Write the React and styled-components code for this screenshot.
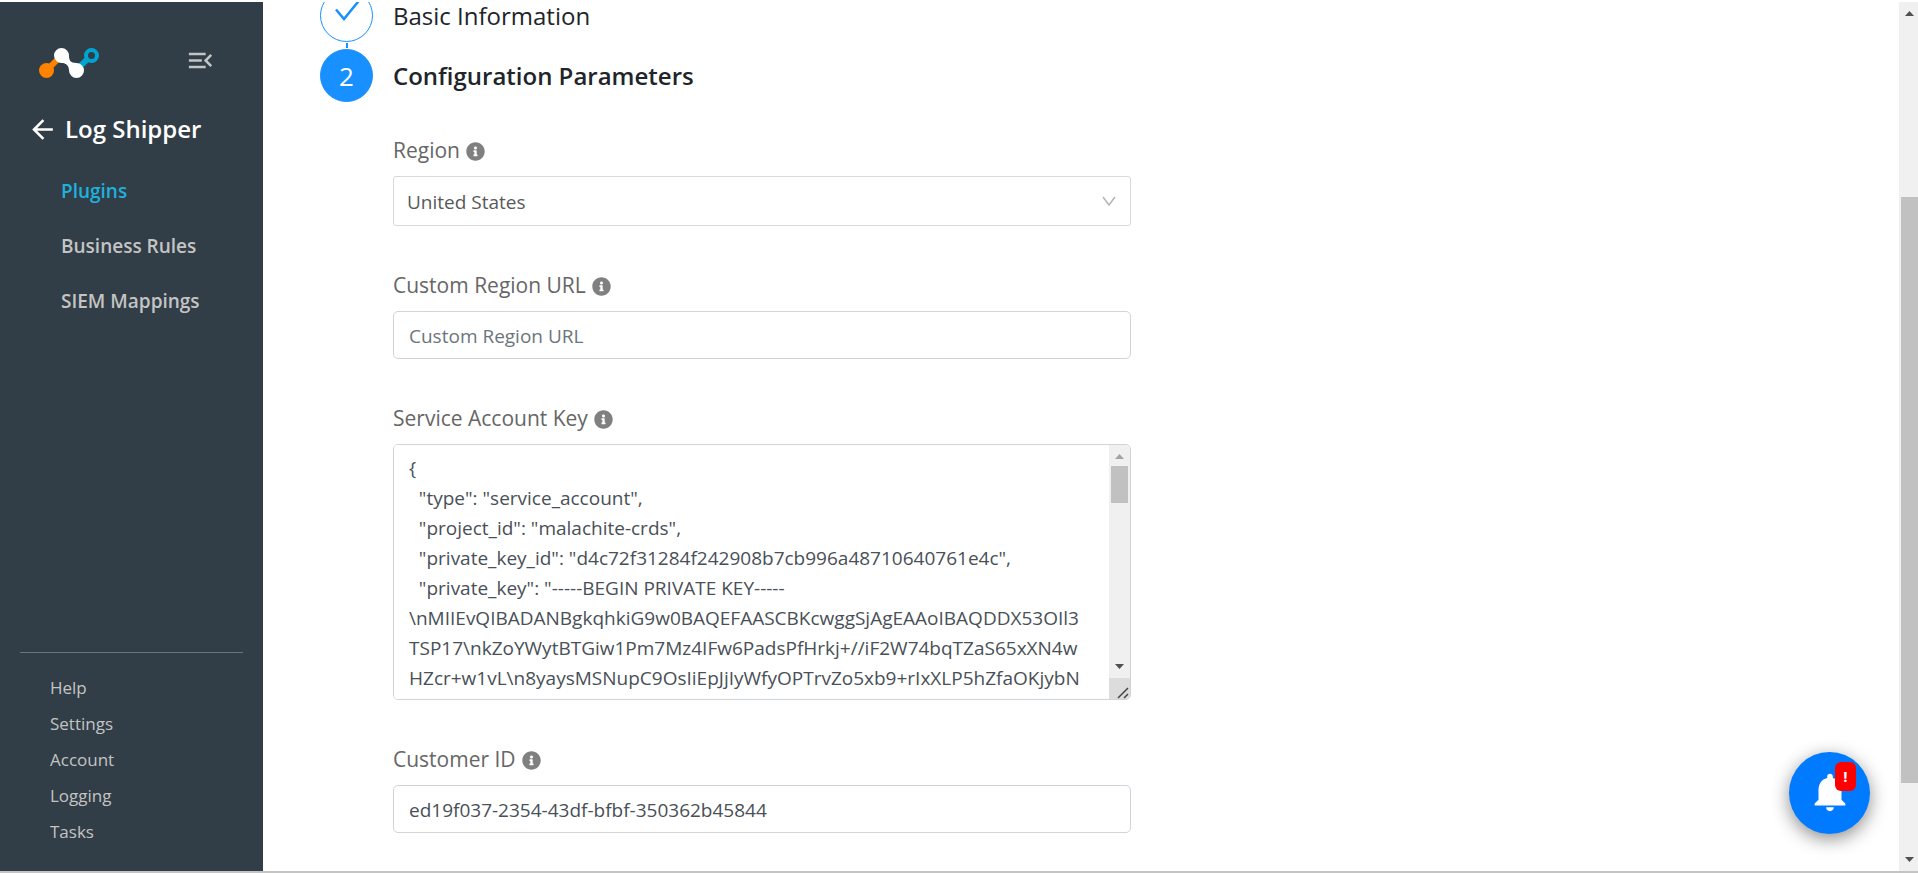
import { useState } from "react"
import styled, { createGlobalStyle } from "styled-components"
import { FaInfoCircle } from "react-icons/fa"
import { MdArrowBack, MdMenuOpen, MdNotifications } from "react-icons/md"

const GlobalStyle = createGlobalStyle`
  * {
    box-sizing: border-box;
  }

  body {
    margin: 0;
    background: #fff;
    font-family: "Open Sans", "Noto Sans", sans-serif;
    font-size: 19px;
    line-height: 30px;
    color: #495057;
  }

  button,
  input,
  select,
  textarea {
    font: inherit;
    color: inherit;
  }
`

const Page = styled.div`
  display: flex;
  height: 100vh;
  padding-top: 2px;
  border-bottom: 2px solid #c4c4c4;
  overflow: hidden;
`

const Sidebar = styled.aside`
  display: flex;
  flex-direction: column;
  flex: 0 0 263px;
  padding: 0 20px 21px;
  background: #313e47;
  color: #c4c4c4;
`

const SidebarTop = styled.div`
  display: flex;
  align-items: flex-start;
  justify-content: space-between;
  height: 80px;
  padding: 43px 27px 0 18px;
`

const Logo = styled.svg`
  width: 62px;
  height: 34px;
  margin-top: 1px;
`

const IconButton = styled.button`
  display: flex;
  padding: 0;
  border: none;
  background: none;
  color: ${(props) => props.$color || "#c4c4c4"};
  font-size: 31px;
  cursor: pointer;
`

const TitleRow = styled.div`
  display: flex;
  align-items: center;
  gap: 7px;
  padding: 31px 0 0 7px;
`

const AppTitle = styled.h1`
  margin: 0;
  color: #fff;
  font-size: 24px;
  font-weight: 600;
  line-height: 32px;
`

const MainNav = styled.nav`
  display: flex;
  flex-direction: column;
  gap: 25px;
  padding: 31px 0 0 41px;
`

const NavLink = styled.a`
  color: ${(props) => (props.$active ? "#1fb1dc" : "#c4c4c4")};
  font-weight: 600;
  text-decoration: none;
`

const FooterNav = styled.nav`
  display: flex;
  flex-direction: column;
  margin-top: auto;
  padding: 17px 0 0 30px;
  border-top: 1px solid #69737a;
`

const FooterLink = styled.a`
  color: #c4c4c4;
  font-size: 17px;
  line-height: 36px;
  text-decoration: none;
`

const Main = styled.main`
  flex: 1;
  min-width: 0;
  padding-left: 57px;
  overflow: hidden;
`

const Steps = styled.ol`
  margin: -13px 0 0;
  padding: 0;
  list-style: none;
`

const Step = styled.li`
  display: flex;
  gap: 20px;
`

const StepRail = styled.div`
  display: flex;
  flex-direction: column;
  align-items: center;
  flex: 0 0 53px;
`

const StepCircle = styled.div`
  display: flex;
  align-items: center;
  justify-content: center;
  width: 53px;
  height: 53px;
  border: 1px solid #1890ff;
  border-radius: 50%;
  background: ${(props) => (props.$active ? "#1890ff" : "#fff")};
  color: ${(props) => (props.$active ? "#fff" : "#1890ff")};
  font-size: 26px;
`

const StepTail = styled.div`
  width: 2px;
  height: 5px;
  margin: 1px 0;
  background: #1890ff;
`

const StepBody = styled.div`
  flex: 1;
  min-width: 0;
  padding-top: 13px;
`

const StepTitle = styled.h2`
  margin: 0;
  color: #212529;
  font-size: 24px;
  font-weight: ${(props) => (props.$active ? 600 : 400)};
  line-height: 28px;
`

const Form = styled.form`
  display: flex;
  flex-direction: column;
  gap: 43px;
  width: 49%;
  padding-top: 44px;
`

const Field = styled.div`
  display: flex;
  flex-direction: column;
  gap: 10px;
`

const LabelRow = styled.div`
  display: flex;
  align-items: center;
  gap: 6px;
  height: 32px;
`

const Label = styled.label`
  color: #666;
  font-size: 21px;
`

const Info = styled(FaInfoCircle)`
  width: 19px;
  height: 19px;
  margin-top: 2px;
  color: #808080;
`

const SelectBox = styled.div`
  display: flex;
  align-items: center;
  height: 50px;
  padding-right: 14px;
  border: 1px solid #d9d9d9;
  border-radius: 3px;
`

const Select = styled.select`
  flex: 1;
  height: 100%;
  padding: 2px 13px 0;
  border: none;
  background: none;
  color: #595959;
  font-size: 19px;
  appearance: none;
  outline: none;
`

const Input = styled.input`
  height: 48px;
  padding: 2px 15px 0;
  border: 1px solid #ced4da;
  border-radius: 5px;
  background: #fff;
  outline: none;

  &::placeholder {
    color: #6c757d;
    opacity: 1;
  }
`

const KeyBox = styled.div`
  display: flex;
  height: 256px;
  border: 1px solid #ced4da;
  border-radius: 5px;
  overflow: hidden;
`

const KeyText = styled.textarea`
  flex: 1;
  min-width: 0;
  padding: 8px 15px;
  border: none;
  outline: none;
  resize: none;
  overflow: hidden;
  white-space: pre;
`

const ScrollTrack = styled.div`
  display: flex;
  flex-direction: column;
  align-items: center;
  flex: 0 0 ${(props) => props.$width}px;
  background: #f0f0f0;
`

const ScrollArrow = styled.svg`
  flex: none;
  width: 9px;
  height: 21px;
  fill: ${(props) => (props.$dim ? "#a3a3a3" : "#505050")};
`

const ScrollThumb = styled.div`
  flex: 0 0 ${(props) => props.$size};
  width: 17px;
  margin-bottom: auto;
  background: #c1c1c1;
`

const PageTrack = styled(ScrollTrack)`
  padding-left: 2px;

  ${ScrollThumb} {
    margin-top: 174px;
  }
`

const ResizeCorner = styled.svg`
  flex: none;
  width: 21px;
  height: 21px;
  background: #dcdcdc;
  stroke: #444;
`

const AlertButton = styled.button`
  position: fixed;
  right: 48px;
  bottom: 39px;
  display: flex;
  align-items: center;
  justify-content: center;
  width: 81px;
  height: 82px;
  padding: 0 0 2px;
  border: none;
  border-radius: 50%;
  background: #007bff;
  box-shadow: 0 5px 18px rgba(0, 0, 0, 0.45);
  color: #fff;
  font-size: 46px;
  cursor: pointer;
`

const AlertBadge = styled.span`
  position: absolute;
  top: 10px;
  right: 14px;
  width: 21px;
  height: 29px;
  border-radius: 6px;
  background: #f00;
  font-size: 15px;
  font-weight: 700;
  line-height: 28px;
  text-align: center;
`

const serviceKey = [
  "{",
  '  "type": "service_account",',
  '  "project_id": "malachite-crds",',
  '  "private_key_id": "d4c72f31284f242908b7cb996a48710640761e4c",',
  '  "private_key": "-----BEGIN PRIVATE KEY-----',
  "\\nMIIEvQIBADANBgkqhkiG9w0BAQEFAASCBKcwggSjAgEAAoIBAQDDX53OIl3",
  "TSP17\\nkZoYWytBTGiw1Pm7Mz4IFw6PadsPfHrkj+//iF2W74bqTZaS65xXN4w",
  "HZcr+w1vL\\n8yaysMSNupC9OsIiEpJjIyWfyOPTrvZo5xb9+rIxXLP5hZfaOKjybN",
].join("\n")

const mainLinks = ["Plugins", "Business Rules", "SIEM Mappings"]
const footerLinks = ["Help", "Settings", "Account", "Logging", "Tasks"]

const UpArrow = ({ dim }) => (
  <ScrollArrow viewBox="0 0 9 21" $dim={dim} aria-hidden="true">
    <path d="M0 14L4.5 9L9 14Z" />
  </ScrollArrow>
)

const DownArrow = () => (
  <ScrollArrow viewBox="0 0 9 21" aria-hidden="true">
    <path d="M0 7L4.5 12L9 7Z" />
  </ScrollArrow>
)

const FormField = ({ id, label, children }) => (
  <Field>
    <LabelRow>
      <Label htmlFor={id}>{label}</Label>
      <Info aria-hidden="true" />
    </LabelRow>
    {children}
  </Field>
)

const App = () => {
  const [formData, setFormData] = useState({
    region: "us",
    customUrl: "",
    serviceKey,
    customerId: "ed19f037-2354-43df-bfbf-350362b45844",
  })

  const handleChange = (e) => {
    setFormData({
      ...formData,
      [e.target.name]: e.target.value,
    })
  }

  return (
    <Page>
      <GlobalStyle />

      <Sidebar>
        <SidebarTop>
          <Logo viewBox="0 0 62 34" role="img" aria-label="Home">
            <path d="M8.500 24.500L22 11" stroke="#ff8300" strokeWidth="6" />
            <circle cx="8.500" cy="24.500" r="7.500" fill="#ff8300" />
            <path d="M38 24.500L50 12.500" stroke="#00a4d3" strokeWidth="6" />
            <circle cx="53.500" cy="9.500" r="5.500" fill="none" stroke="#00a4d3" strokeWidth="4" />
            <path
              d="M23.500 2A7.500 7.500 0 0 1 31 9.500C31 14 32 17 38.500 17A7.500 7.500 0 1 1 31 24.500C31 19.500 28 17 23.500 17A7.500 7.500 0 0 1 23.500 2Z"
              fill="#fff"
            />
          </Logo>
          <IconButton type="button" aria-label="Collapse menu">
            <MdMenuOpen />
          </IconButton>
        </SidebarTop>

        <TitleRow>
          <IconButton type="button" $color="#fff" aria-label="Back">
            <MdArrowBack />
          </IconButton>
          <AppTitle>Log Shipper</AppTitle>
        </TitleRow>

        <MainNav>
          {mainLinks.map((link, index) => (
            <NavLink key={link} href="#" $active={index === 0}>
              {link}
            </NavLink>
          ))}
        </MainNav>

        <FooterNav>
          {footerLinks.map((link) => (
            <FooterLink key={link} href="#">
              {link}
            </FooterLink>
          ))}
        </FooterNav>
      </Sidebar>

      <Main>
        <Steps>
          <Step>
            <StepRail>
              <StepCircle>
                <svg width="26" height="38" viewBox="0 0 26 38" fill="none" aria-hidden="true">
                  <path d="M2 12.500L10 22L25.500 3" stroke="currentColor" strokeWidth="2.500" />
                </svg>
              </StepCircle>
              <StepTail />
            </StepRail>
            <StepBody>
              <StepTitle>Basic Information</StepTitle>
            </StepBody>
          </Step>

          <Step>
            <StepRail>
              <StepCircle $active>2</StepCircle>
            </StepRail>
            <StepBody>
              <StepTitle $active>Configuration Parameters</StepTitle>

              <Form>
                <FormField id="region" label="Region">
                  <SelectBox>
                    <Select id="region" name="region" value={formData.region} onChange={handleChange}>
                      <option value="us">United States</option>
                      <option value="custom">Custom Region</option>
                    </Select>
                    <svg width="14" height="10" viewBox="0 0 14 10" fill="none" aria-hidden="true">
                      <path d="M1 1L7 9L13 1" stroke="#b5b5b5" strokeWidth="1.500" />
                    </svg>
                  </SelectBox>
                </FormField>

                <FormField id="customUrl" label="Custom Region URL">
                  <Input
                    type="text"
                    id="customUrl"
                    name="customUrl"
                    value={formData.customUrl}
                    onChange={handleChange}
                    placeholder="Custom Region URL"
                  />
                </FormField>

                <FormField id="serviceKey" label="Service Account Key">
                  <KeyBox>
                    <KeyText
                      id="serviceKey"
                      name="serviceKey"
                      value={formData.serviceKey}
                      onChange={handleChange}
                      spellCheck={false}
                    />
                    <ScrollTrack $width={21}>
                      <UpArrow dim />
                      <ScrollThumb $size="37px" />
                      <DownArrow />
                      <ResizeCorner viewBox="0 0 21 21" aria-hidden="true">
                        <path d="M9 20L19 10M15 20L19 16" strokeWidth="1.500" />
                      </ResizeCorner>
                    </ScrollTrack>
                  </KeyBox>
                </FormField>

                <FormField id="customerId" label="Customer ID">
                  <Input
                    type="text"
                    id="customerId"
                    name="customerId"
                    value={formData.customerId}
                    onChange={handleChange}
                  />
                </FormField>
              </Form>
            </StepBody>
          </Step>
        </Steps>
      </Main>

      <PageTrack $width={19}>
        <UpArrow />
        <ScrollThumb $size="586px" />
        <DownArrow />
      </PageTrack>

      <AlertButton type="button" aria-label="Notifications">
        <MdNotifications />
        <AlertBadge>!</AlertBadge>
      </AlertButton>
    </Page>
  )
}

export default App
